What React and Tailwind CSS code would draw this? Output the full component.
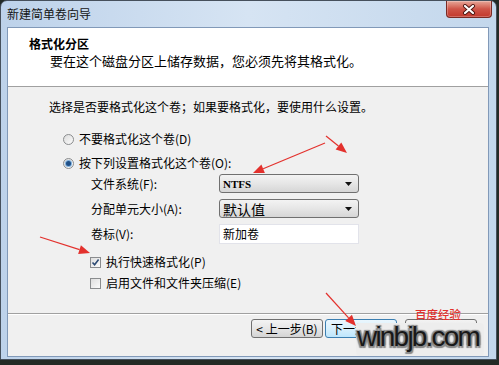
import { useMemo } from 'react'

// red annotation arrow, tip at (x2, y2)
function Arrow({ x1, y1, x2, y2 }) {
  const a = Math.atan2(y2 - y1, x2 - x1)
  const len = 11
  const half = 4.5
  const bx = x2 - len * Math.cos(a)
  const by = y2 - len * Math.sin(a)
  const px = -Math.sin(a) * half
  const py = Math.cos(a) * half
  return (
    <g>
      <line x1={x1} y1={y1} x2={bx} y2={by} stroke="#e3312d" strokeWidth="1.2" />
      <polygon points={`${x2},${y2} ${bx + px},${by + py} ${bx - px},${by - py}`} fill="#e3312d" />
    </g>
  )
}

function Radio({ checked, children }) {
  return (
    <div className="flex items-center h-[16px] leading-[16px]">
      <span className="w-[11px] h-[11px] rounded-full border border-[#8a8c8e] bg-gradient-to-br from-[#dcdcdc] to-[#fbfbfb] flex items-center justify-center shrink-0">
        {checked && <span className="w-[5px] h-[5px] rounded-full bg-[#1f4f86] ring-1 ring-[#7fb0dd]" />}
      </span>
      <span className="ml-[5px]">{children}</span>
    </div>
  )
}

function Check({ checked, children }) {
  return (
    <div className="flex items-center h-[16px] leading-[16px]">
      <span className="w-[11px] h-[11px] border border-[#8a8c8e] bg-gradient-to-br from-[#dedede] to-[#fbfbfb] flex items-center justify-center shrink-0">
        {checked && (
          <svg width="9" height="9" viewBox="0 0 9 9">
            <path d="M1.5 4.5 L3.6 6.8 L7.6 1.6" fill="none" stroke="#2c4a73" strokeWidth="1.6" />
          </svg>
        )}
      </span>
      <span className="ml-[5px]">{children}</span>
    </div>
  )
}

function Combo({ children, className }) {
  return (
    <div className="flex items-center justify-between w-[140px] h-[19px] rounded-[3px] border border-[#707070] bg-gradient-to-b from-[#f3f3f3] via-[#e6e6e6] to-[#d6d6d6] pl-[3px] pr-[6px]">
      <span className={className}>{children}</span>
      <svg width="7" height="4" viewBox="0 0 7 4">
        <path d="M0 0 H7 L3.5 4 Z" fill="#111" />
      </svg>
    </div>
  )
}

export default function App() {
  const arrows = useMemo(
    () => [
      { x1: 325, y1: 143, x2: 253, y2: 173 },
      { x1: 326, y1: 136, x2: 347, y2: 153 },
      { x1: 40, y1: 237, x2: 90, y2: 253 },
      { x1: 326, y1: 293, x2: 356, y2: 326 },
    ],
    []
  )

  return (
    <div className="relative w-[499px] h-[365px] overflow-hidden bg-[#232a25] font-['Noto_Sans_CJK_SC','Liberation_Sans',sans-serif] text-[12px] text-black">
      {/* Window */}
      <div className="flex flex-col w-[497px] h-[360px] rounded-t-[7px] border border-[#46505c] bg-gradient-to-r from-[#bdd2ea] via-[#d6e4f3] to-[#c3d7ec]">
        {/* Title bar */}
        <div className="flex items-start justify-between h-[26px] shrink-0">
          <span className="pl-[6px] pt-[5px] leading-[16px] text-[#141414]">新建简单卷向导</span>
          <div className="mr-[4px] w-[46px] h-[17px] rounded-b-[4px] border border-t-0 border-[#7a2a24] bg-gradient-to-b from-[#e6a699] via-[#cf5448] to-[#c2382c] flex items-center justify-center shadow-[inset_0_0_0_1px_rgba(255,255,255,0.25)]">
            <svg width="14" height="11" viewBox="0 0 14 11">
              <path d="M3 2 L11 9 M11 2 L3 9" stroke="#4a1410" strokeWidth="4" strokeLinecap="round" />
              <path d="M3 2 L11 9 M11 2 L3 9" stroke="#ffffff" strokeWidth="2.2" strokeLinecap="round" />
            </svg>
          </div>
        </div>

        {/* Client area */}
        <div className="flex flex-col flex-1 ml-[6px] mr-[7px] mb-[2px] border border-[#8199b8] bg-[#f0f0f0]">
          {/* Header */}
          <div className="h-[59px] shrink-0 bg-white border-b border-[#a0a0a0] pl-[21px] pt-[8px]">
            <div className="font-bold leading-[16px]">格式化分区</div>
            <div className="pl-[21px] mt-[1px] text-[13px] leading-[16px]">要在这个磁盘分区上储存数据，您必须先将其格式化。</div>
          </div>

          {/* Body */}
          <div className="h-[226px] shrink-0 pl-[41px] pt-[12px]">
            <div className="leading-[16px]">选择是否要格式化这个卷；如果要格式化，要使用什么设置。</div>

            <div className="pl-[14px] mt-[16px] flex flex-col gap-[8px]">
              <Radio>不要格式化这个卷(D)</Radio>
              <Radio checked>按下列设置格式化这个卷(O):</Radio>
            </div>

            <div className="pl-[42px] mt-[3px] grid grid-cols-[128px_140px] gap-y-[6px] items-center">
              <span className="leading-[16px]">文件系统(F):</span>
              <Combo className="font-['Liberation_Serif',serif] font-bold text-[11px] leading-[14px]">NTFS</Combo>
              <span className="leading-[16px]">分配单元大小(A):</span>
              <Combo className="text-[14px] leading-[16px]">默认值</Combo>
              <span className="leading-[16px]">卷标(V):</span>
              <div className="w-[140px] h-[20px] border border-[#e2e3ea] bg-white pl-[3px] leading-[18px]">新加卷</div>
            </div>

            <div className="pl-[41px] mt-[10px] flex flex-col gap-[5px]">
              <Check checked>执行快速格式化(P)</Check>
              <Check>启用文件和文件夹压缩(E)</Check>
            </div>
          </div>

          {/* Footer */}
          <div className="flex-1 border-t border-[#a0a0a0] shadow-[inset_0_1px_0_#ffffff] flex justify-end items-start pt-[5px] pr-[11px]">
            <button className="w-[72px] h-[19px] rounded-[3px] border border-[#707070] bg-gradient-to-b from-[#f3f3f3] via-[#e6e6e6] to-[#d4d4d4] leading-[16px]">
              &lt; 上一步(B)
            </button>
            <button className="ml-[2px] w-[72px] h-[19px] rounded-[3px] border border-[#3c7fb1] bg-gradient-to-b from-[#eaf6fd] via-[#d9f0fc] to-[#bee6fd] leading-[16px] text-left pl-[5px]">
              下一步
            </button>
            <button className="ml-[8px] w-[72px] h-[19px] rounded-[3px] border border-[#707070] bg-gradient-to-b from-[#f3f3f3] via-[#e6e6e6] to-[#d4d4d4]" />
          </div>
        </div>
      </div>

      {/* Watermarks over the footer */}
      <div className="absolute left-[415px] top-[306px] text-[11.5px] leading-[16px] font-medium text-[#e2302c]">百度经验</div>
      <div className="absolute left-[356px] top-[323px] w-[128px] h-[33px] rounded-[4px] bg-[#ededed] pl-[1px] font-['Liberation_Sans',sans-serif] text-[28px] leading-none tracking-[-1.8px] text-[#181818] [text-shadow:0_0_2px_#7e7e7e,1.5px_1.5px_1px_#8a8a8a,-1.5px_-1.5px_1px_#8a8a8a,1.5px_-1.5px_1px_#8a8a8a,-1.5px_1.5px_1px_#8a8a8a]">
        winbjb.com
      </div>

      {/* Annotation arrows */}
      <svg className="absolute inset-0 pointer-events-none" width="499" height="365">
        {arrows.map((a, i) => (
          <Arrow key={i} {...a} />
        ))}
      </svg>
    </div>
  )
}
